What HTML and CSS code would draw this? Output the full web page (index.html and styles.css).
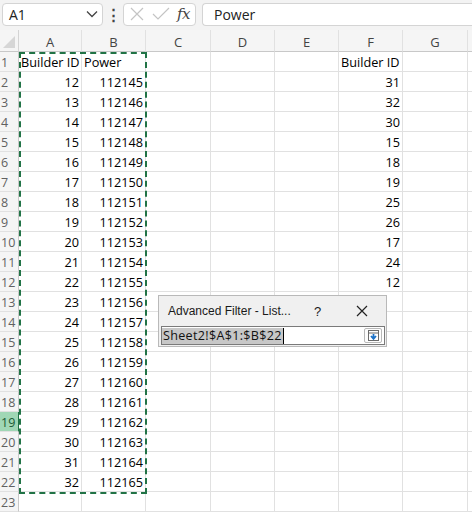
FILE: index.html
```html
<!DOCTYPE html>
<html>
<head>
<meta charset="utf-8">
<link rel="stylesheet" href="styles.css">
</head>
<body>
<div class="app">
  <div class="topbar">
    <div class="namebox">
      <span class="name">A1</span>
      <svg class="chev" width="12" height="8" viewBox="0 0 12 8"><path d="M1 1.5 L6 6.5 L11 1.5" fill="none" stroke="#444" stroke-width="1.3"/></svg>
    </div>
    <div class="dots">⋮</div>
    <div class="fbtns">
      <svg width="18" height="18" viewBox="0 0 18 18"><path d="M3 3 L15 15 M15 3 L3 15" stroke="#c4c4c4" stroke-width="1.2" fill="none"/></svg>
      <svg width="20" height="18" viewBox="0 0 20 18"><path d="M2 9 L7 14 L18 3" stroke="#c4c4c4" stroke-width="1.2" fill="none"/></svg>
      <span class="fx">fx</span>
    </div>
    <div class="formula">Power</div>
  </div>
  <div class="sheet">
    <div class="grid" id="grid">
      <div class="corner"><svg width="14" height="14" viewBox="0 0 14 14"><path d="M13 1 L13 13 L1 13 Z" fill="#d6d6d6"/></svg></div>
      <div class="ch">A</div><div class="ch">B</div><div class="ch">C</div><div class="ch">D</div><div class="ch">E</div><div class="ch">F</div><div class="ch">G</div><div class="ch last"></div>
    </div>
    <div class="ants"></div>
    <div class="dialog">
      <div class="dtitle">
        <span class="dt">Advanced Filter - List...</span>
        <span class="dq">?</span>
        <svg class="dx" width="12" height="12" viewBox="0 0 12 12"><path d="M1 1 L11 11 M11 1 L1 11" stroke="#222" stroke-width="1.2" fill="none"/></svg>
      </div>
      <div class="dinput">
        <span class="sel">Sheet2!$A$1:$B$22</span><span class="caret"></span>
        <span class="collapse"><svg width="13" height="13" viewBox="0 0 13 13"><rect x="1.5" y="1.5" width="10" height="10" fill="#fff" stroke="#6b6b6b"/><path d="M1.5 4 H11.5" stroke="#6b6b6b"/><path d="M6.5 5 V9.5 M4 7 L6.5 9.8 L9 7" stroke="#1e73c8" stroke-width="1.8" fill="none"/></svg></span>
      </div>
    </div>
  </div>
</div>
<script src="script.js"></script>
</body>
</html>
```

FILE: script.js
```js
(function(){
  var g = document.getElementById('grid');
  var f = [31,32,30,15,18,19,25,26,17,24,12];
  var html = '';
  for (var r = 1; r <= 23; r++) {
    html += '<div class="rh' + (r === 19 ? ' act' : '') + '">' + r + '</div>';
    var cells = ['', '', '', '', '', '', '', ''];
    var cls = ['', '', '', '', '', '', '', ''];
    if (r === 1) { cells[0] = 'Builder ID'; cells[1] = 'Power'; cells[5] = 'Builder ID'; }
    else if (r <= 22) {
      cells[0] = String(r + 10); cls[0] = ' num';
      cells[1] = String(112143 + r); cls[1] = ' num';
      if (r <= 12) { cells[5] = String(f[r - 2]); cls[5] = ' num'; }
    }
    for (var c = 0; c < 8; c++) {
      html += '<div class="c' + cls[c] + (c === 7 ? ' last' : '') + '">' + cells[c] + '</div>';
    }
  }
  g.insertAdjacentHTML('beforeend', html);
})();
```

FILE: styles.css
```css
* { box-sizing: border-box; }
html, body { margin: 0; padding: 0; background: #fff; }
body { width: 472px; height: 513px; overflow: hidden; font-family: "Open Sans", "Noto Sans", sans-serif; }
.app { width: 472px; height: 513px; display: flex; flex-direction: column; }

.topbar {
  height: 30px; background: #f3f3f3; display: flex; align-items: center;
  padding: 0 0 2px 2px; gap: 0;
}
.namebox {
  width: 101px; height: 23px; background: #fff; border: 1px solid #d4d4d4; border-radius: 4px;
  display: flex; align-items: center; justify-content: space-between; padding: 0 4px 0 6px;
  font-size: 14px; color: #222;
}
.dots { width: 20px; text-align: center; font-size: 15px; font-weight: 700; color: #444; margin-left: 0; line-height: 1; }
.fbtns {
  width: 73px; height: 23px; background: #fff; border: 1px solid #d4d4d4; border-radius: 4px;
  display: flex; align-items: center; justify-content: space-between; padding: 0 5px 0 4px;
}
.fx { font-family: "DejaVu Serif", "Liberation Serif", serif; font-style: italic; font-size: 15px; color: #444; font-weight: 400; letter-spacing: -0.5px; }
.formula {
  flex: 1; height: 23px; margin-left: 6px; background: #fff; border: 1px solid #d4d4d4; border-right: none;
  border-radius: 4px 0 0 4px; font-size: 14px; color: #222; padding: 1px 0 0 11px; line-height: 20px;
}

.sheet { position: relative; flex: 1; }
.grid {
  display: grid;
  grid-template-columns: 19px 63px 64px 65px 64px 64px 64px 65px 4px;
  grid-template-rows: 22px repeat(23, 20px);
}
.corner, .ch, .rh { background: #f5f5f5; }
.corner { border-right: 1px solid #d4d4d4; border-bottom: 1px solid #c8c8c8; display: flex; align-items: flex-end; justify-content: flex-end; padding: 0 2px 2px 0; }
.ch {
  border-right: 1px solid #e1e1e1; border-bottom: 1px solid #c8c8c8;
  font-size: 13px; color: #444; text-align: center; line-height: 19px; padding-top: 3px;
}
.rh {
  border-right: 1px solid #c8c8c8; border-bottom: 1px solid #e1e1e1;
  font-size: 12.5px; color: #616161; padding-left: 1px; padding-top: 2px; line-height: 17px; overflow: hidden; white-space: nowrap;
}
.rh.act { background: #a0d7b5; color: #1a5a34; border-right-color: #217346; }
.c {
  border-right: 1px solid #e1e1e1; border-bottom: 1px solid #e1e1e1;
  font-size: 12.7px; color: #000; line-height: 17px; padding: 2px 2px 0; white-space: nowrap; overflow: visible;
}
.c.num { text-align: right; }
.last { border-right: none; }

.ants {
  position: absolute; left: 19px; top: 22px; width: 128px; height: 442px;
  border: 2px dashed #217346;
}

.dialog {
  position: absolute; left: 158px; top: 265px; width: 229px; height: 52px;
  background: #f0f0f0; border: 1px solid #b9b9b9;
}
.dtitle { height: 30px; display: flex; align-items: center; padding-left: 9px; font-size: 12px; color: #1a1a1a; font-family: "Liberation Sans", sans-serif; }
.dt { width: 146px; }
.dq { width: 42px; font-size: 13px; }
.dx { margin-left: 0; }
.dinput {
  margin: 0 1px 0 2px; height: 19px; background: #fff; border: 1px solid #7a7a7a;
  display: flex; align-items: center; position: relative;
}
.sel { background: #c7c7c7; color: #111; font-size: 12.6px; line-height: 16px; padding: 0 1px 0 1px; letter-spacing: 0.3px; }
.caret { width: 1px; height: 16px; background: #000; }
.collapse {
  position: absolute; right: 2px; top: 1px; width: 18px; height: 15px;
  border: 1px solid #b9b9b9; border-radius: 2px; background: #fdfdfd;
  display: flex; align-items: center; justify-content: center;
}
```
